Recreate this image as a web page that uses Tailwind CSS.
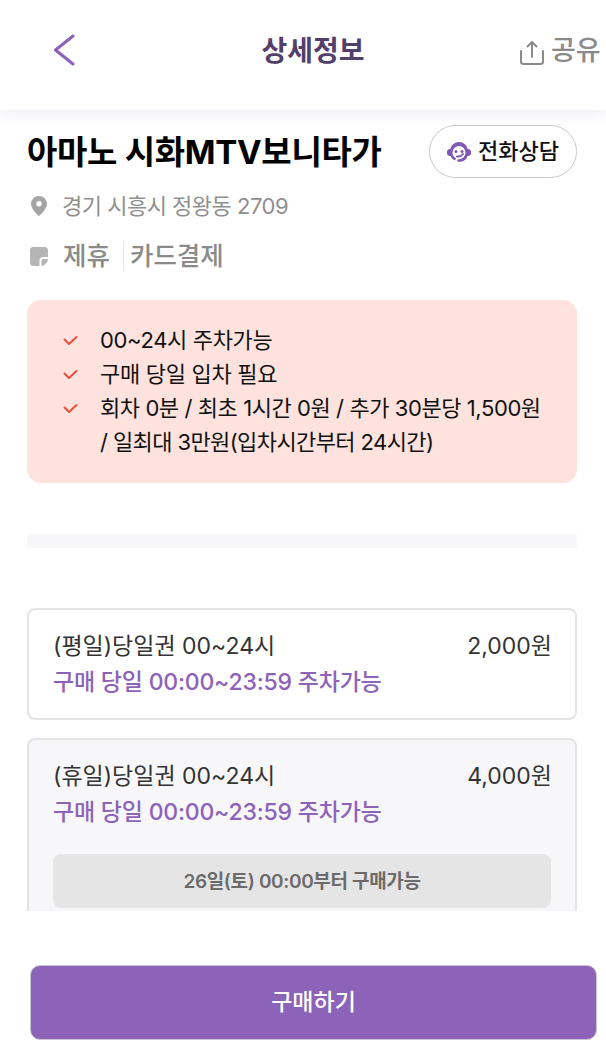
<!DOCTYPE html>
<html lang="ko">
<head>
    <meta charset="UTF-8">
    <meta name="viewport" content="width=device-width, initial-scale=1.0">
    <title>상세정보</title>
    <script src="https://cdn.jsdelivr.net/npm/@tailwindcss/browser@4"></script>
</head>
<body class="bg-white font-['Inter','Noto_Sans_CJK_KR',sans-serif] overflow-hidden">
    <div class="flex flex-col h-[1053px] w-[606px] overflow-hidden">
        <!-- header -->
        <header class="relative z-10 h-[110px] shrink-0 bg-white shadow-[0_4px_14px_rgba(70,60,130,0.09)]">
            <div class="relative flex items-center justify-center h-[102px] pl-[20px]">
                <a class="absolute left-[53px] top-[34px]">
                    <svg class="block" width="23" height="32" viewBox="0 0 23 32" fill="none"><path d="M20 2 L2.500 16 L20 30" stroke="#8d62b9" stroke-width="3" stroke-linecap="round" stroke-linejoin="round"/></svg>
                </a>
                <h1 class="text-[28px] font-bold text-[#523f6c]">상세정보</h1>
                <div class="absolute left-[519px] top-[35px] flex items-center gap-[6px] text-[#8a8a8a]">
                    <svg class="mt-[4px]" width="26" height="26" viewBox="0 0 26 26" fill="none" stroke="#8a8a8a" stroke-width="2" stroke-linecap="round" stroke-linejoin="round"><path d="M13 17V2M8.500 6.500 13 2l4.500 4.500"/><path d="M2 11v10.500a2.500 2.500 0 0 0 2.500 2.500h17a2.500 2.500 0 0 0 2.500-2.500V11"/></svg>
                    <span class="text-[27px] font-medium leading-8 whitespace-nowrap">공유</span>
                </div>
            </div>
        </header>

        <main class="h-[801px] shrink-0 overflow-hidden pl-[27px] pr-[29px]">
            <div class="flex items-center justify-between mt-[15px] h-[53px]">
                <h2 class="text-[33px] font-bold text-black tracking-[-0.3px] leading-[50px] whitespace-nowrap">아마노 시화MTV보니타가</h2>
                <button class="flex items-center justify-center gap-[7px] w-[148px] h-[53px] rounded-[27px] border border-[#c9c9c9] bg-white">
                    <svg width="24" height="20" viewBox="0 0 24 20">
                        <path fill="#8058b5" fill-rule="evenodd" d="M12 0a9 9 0 0 1 8.800 7.200A2.600 2.600 0 0 1 24 9.700v1.600a2.600 2.600 0 0 1-3.300 2.500A9 9 0 0 1 14 19.800h-2.500a1.300 1.300 0 0 1 0-2.600H12a6.500 6.500 0 0 0 6.500-6.700 6.500 6.500 0 1 0-13 0 6.500 6.500 0 0 0 3.500 5.800l-1 2.200a9 9 0 0 1-4.700-4.700A2.600 2.600 0 0 1 0 11.300V9.700a2.600 2.600 0 0 1 3.200-2.500A9 9 0 0 1 12 0z"/>
                        <circle cx="9" cy="9.500" r="1.500" fill="#8058b5"/>
                        <circle cx="15" cy="9.500" r="1.500" fill="#8058b5"/>
                        <path d="M10 14.500c2 .3 4.500-.5 6-2.500" fill="none" stroke="#8058b5" stroke-width="2" stroke-linecap="round"/>
                    </svg>
                    <span class="text-[22px] font-medium text-[#111]">전화상담</span>
                </button>
            </div>

            <div class="flex items-center mt-[11px] h-[34px] text-[#8f8f8f]">
                <svg class="ml-[4px]" width="16" height="20" viewBox="0 0 16 20"><path fill="#a5a5a5" fill-rule="evenodd" d="M8 0C3.600 0 0 3.500 0 7.800 0 12.500 5 17.800 8 20c3-2.200 8-7.500 8-12.200C16 3.500 12.400 0 8 0zm0 5a2.700 2.700 0 1 1 0 5.400A2.700 2.700 0 0 1 8 5z"/></svg>
                <span class="ml-[15px] text-[22px] tracking-[-0.5px]">경기 시흥시 정왕동 2709</span>
            </div>

            <div class="flex items-center mt-[17px] h-[32px] text-[#8a8a8a]">
                <svg class="ml-[3px]" width="18" height="19" viewBox="0 0 18 19"><path fill="#b5b5b5" d="M3.500 0h11A3.500 3.500 0 0 1 18 3.500V10h-5a3.500 3.500 0 0 0-3.500 3.500V19h-6A3.500 3.500 0 0 1 0 15.500v-12A3.500 3.500 0 0 1 3.500 0z"/><path fill="#b5b5b5" d="M11.500 19v-5.500A1.500 1.500 0 0 1 13 12h5c-.5 3.500-3 6.300-6.500 7z"/></svg>
                <span class="ml-[15px] text-[25.500px] font-medium leading-8">제휴</span>
                <span class="ml-[13px] h-[30px] border-l border-[#e2e2e2]"></span>
                <span class="ml-[6px] text-[25.500px] font-medium leading-8">카드결제</span>
            </div>

            <div class="mt-[28px] h-[183px] rounded-[14px] bg-[#fde2dd] pl-[36px] pt-[23px] text-[22px] leading-[34px] text-[#111]">
                <div class="flex tracking-[-0.35px]">
                    <svg class="mt-[12px] shrink-0" width="15" height="11" viewBox="0 0 15 11" fill="none"><path d="M1.500 4.500 6 9 13.500 2" stroke="#e8503f" stroke-width="2" stroke-linecap="round" stroke-linejoin="round"/></svg>
                    <span class="ml-[22px]">00~24시 주차가능</span>
                </div>
                <div class="flex tracking-[-0.3px]">
                    <svg class="mt-[12px] shrink-0" width="15" height="11" viewBox="0 0 15 11" fill="none"><path d="M1.500 4.500 6 9 13.500 2" stroke="#e8503f" stroke-width="2" stroke-linecap="round" stroke-linejoin="round"/></svg>
                    <span class="ml-[22px]">구매 당일 입차 필요</span>
                </div>
                <div class="flex">
                    <svg class="mt-[12px] shrink-0" width="15" height="11" viewBox="0 0 15 11" fill="none"><path d="M1.500 4.500 6 9 13.500 2" stroke="#e8503f" stroke-width="2" stroke-linecap="round" stroke-linejoin="round"/></svg>
                    <span class="ml-[22px] whitespace-nowrap"><span class="tracking-[-0.42px]">회차 0분 / 최초 1시간 0원 / 추가 30분당 1,500원</span><br><span class="tracking-[-0.6px]">/ 일최대 3만원(입차시간부터 24시간)</span></span>
                </div>
            </div>

            <div class="mt-[51px] h-[14px] bg-[#f7f7fa]"></div>

            <div class="mt-[60px] h-[112px] rounded-[8px] border-2 border-[#e4e4e6] bg-white px-[24px] pt-[19px]">
                <div class="flex justify-between text-[23px] leading-[34px] text-[#333] -mr-px">
                    <span>(평일)당일권 00~24시</span><span>2,000원</span>
                </div>
                <p class="mt-[2px] text-[23px] font-medium leading-[34px] text-[#8d62b9] tracking-[-0.2px]">구매 당일 00:00~23:59 주차가능</p>
            </div>

            <div class="mt-[18px] h-[200px] rounded-t-[8px] border-2 border-[#e4e4e6] bg-[#f7f7fa] px-[24px] pt-[19px]">
                <div class="flex justify-between text-[23px] leading-[34px] text-[#333] -mr-px">
                    <span>(휴일)당일권 00~24시</span><span>4,000원</span>
                </div>
                <p class="mt-[2px] text-[23px] font-medium leading-[34px] text-[#8d62b9] tracking-[-0.2px]">구매 당일 00:00~23:59 주차가능</p>
                <div class="mt-[25px] flex items-center justify-center h-[54px] pt-[3px] rounded-[8px] bg-[#e5e5e5] text-[19px] font-semibold text-[#6b6b6b] tracking-[-0.35px]">26일(토) 00:00부터 구매가능</div>
            </div>
        </main>

        <footer class="pt-[54px] pl-[30px]">
            <button class="flex items-center justify-center w-[567px] h-[75px] rounded-[10px] border border-[#c9c4d2] bg-[#8d62b9] text-[23px] font-medium text-white">구매하기</button>
        </footer>
    </div>
</body>
</html>
